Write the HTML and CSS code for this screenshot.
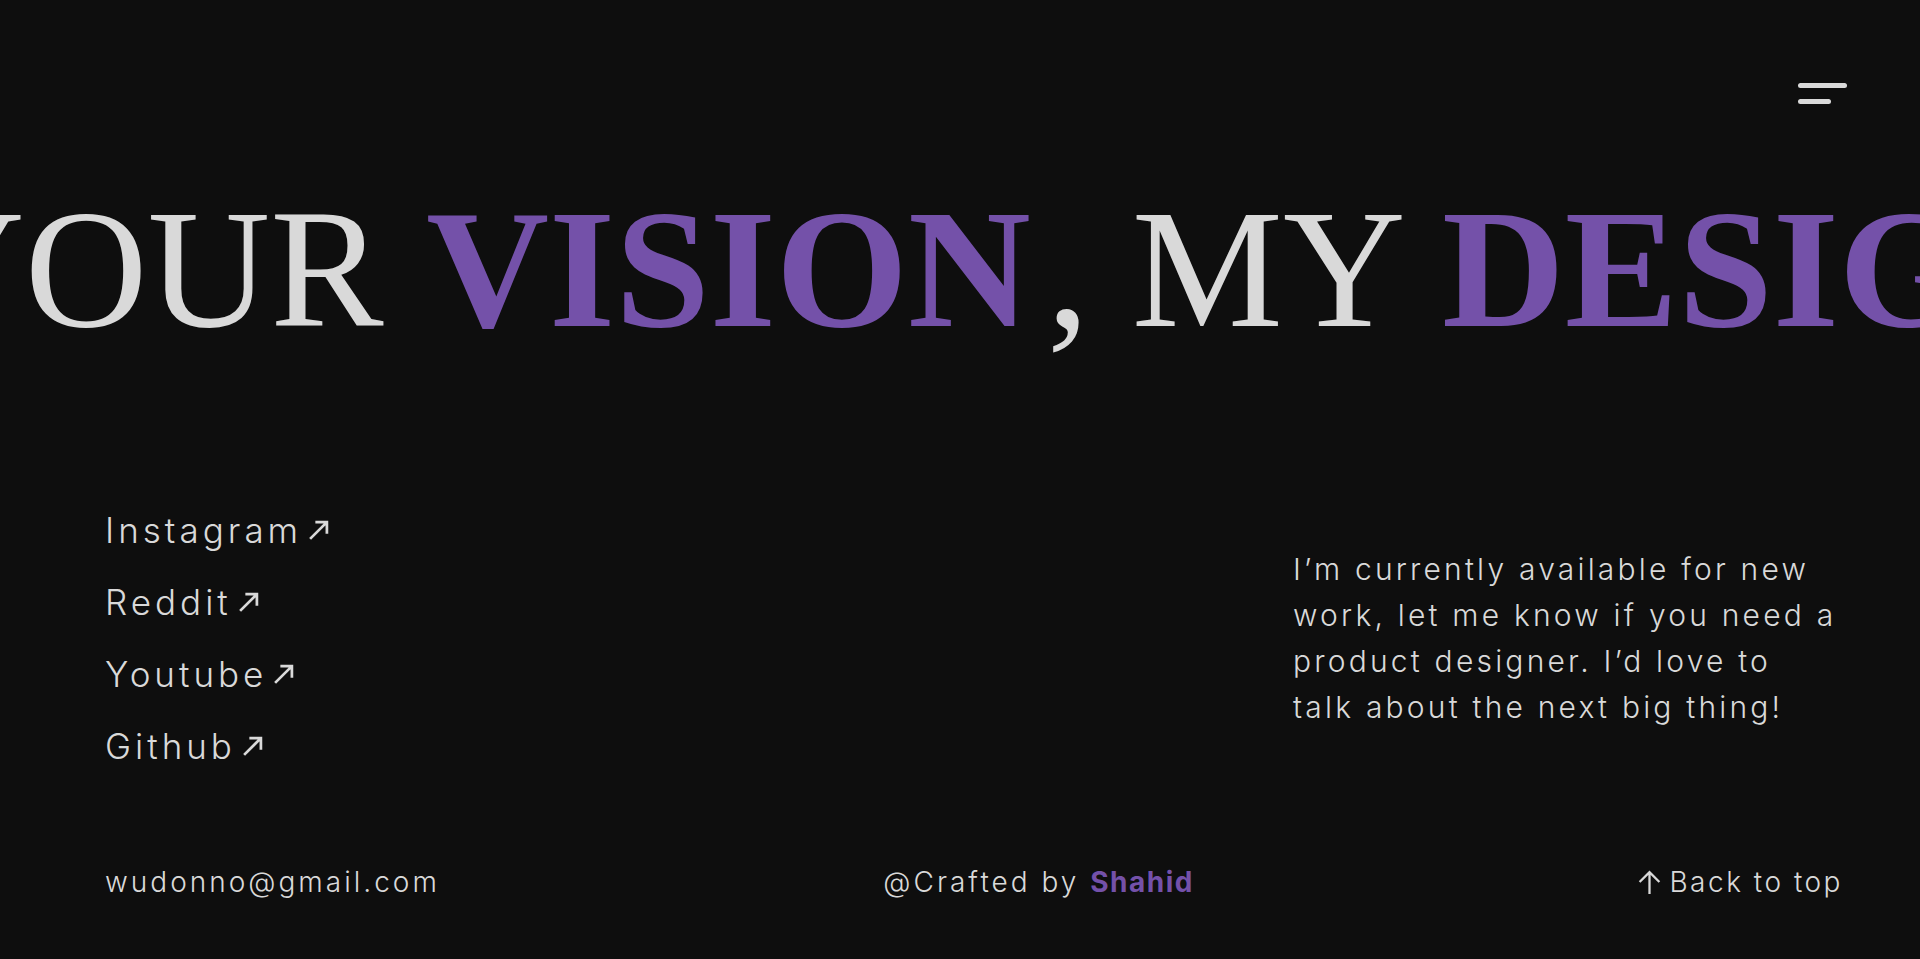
FILE: index.html
```html
<!DOCTYPE html>
<html lang="en">
<head>
<meta charset="utf-8">
<title>Your Vision, My Design</title>
<link rel="stylesheet" href="styles.css">
</head>
<body>
<div class="page">
  <header class="topbar">
    <button class="menu" aria-label="Menu">
      <span class="bar bar-long"></span>
      <span class="bar bar-short"></span>
    </button>
  </header>

  <h1 class="marquee"><span class="track">YOUR <em class="accent">VISION</em><span class="comma">,</span> MY <em class="accent">DESIGN</em><span class="comma">,</span> YOUR <em class="accent">VISION</em></span></h1>

  <section class="info">
    <ul class="socials">
      <li><a class="social" href="#">Instagram<svg class="ext" viewBox="0 0 20 20"><path d="M2 18 L18 2 M7 2 H18 V13"/></svg></a></li>
      <li><a class="social" href="#">Reddit<svg class="ext" viewBox="0 0 20 20"><path d="M2 18 L18 2 M7 2 H18 V13"/></svg></a></li>
      <li><a class="social" href="#">Youtube<svg class="ext" viewBox="0 0 20 20"><path d="M2 18 L18 2 M7 2 H18 V13"/></svg></a></li>
      <li><a class="social" href="#">Github<svg class="ext" viewBox="0 0 20 20"><path d="M2 18 L18 2 M7 2 H18 V13"/></svg></a></li>
    </ul>
    <p class="pitch">I’m currently available for new work, let me know if you need a product designer. I’d love to talk about the next big thing!</p>
  </section>

  <footer class="foot">
    <a class="mail" href="#">wudonno@gmail.com</a>
    <span class="credit">@Crafted by <strong class="author">Shahid</strong></span>
    <a class="totop" href="#"><svg class="up" viewBox="0 0 24 24"><path d="M12 23 V2 M2.5 11.5 L12 2 L21.5 11.5"/></svg>Back to top</a>
  </footer>
</div>
</body>
</html>
```

FILE: styles.css
```css
html, body {
  margin: 0;
  padding: 0;
  background: #0e0e0e;
}

body {
  color: #d9d9d9;
  font-family: Inter, "Noto Sans", sans-serif;
}

.page {
  height: 100vh;
  display: flex;
  flex-direction: column;
  overflow: hidden;
}

.topbar {
  display: flex;
  justify-content: flex-end;
  padding: 83px 73px 0 0;
}

.menu {
  background: none;
  border: 0;
  padding: 0;
  display: flex;
  flex-direction: column;
  align-items: flex-start;
  gap: 11px;
  width: 49px;
  cursor: pointer;
}

.bar {
  display: block;
  height: 5px;
  border-radius: 3px;
  background: #d9d9d9;
}

.bar-long { width: 49px; }
.bar-short { width: 33px; }

.marquee {
  margin: 80px 0 0;
  font-family: "Liberation Serif", "Times New Roman", serif;
  font-weight: 400;
  font-size: 170px;
  line-height: 170px;
  white-space: nowrap;
  overflow: hidden;
  color: #d9d9d9;
}

.track {
  display: inline-block;
  margin-left: -98px;
}

.comma {
  padding-left: 16px;
}

.accent {
  font-style: normal;
  font-weight: 700;
  color: #7451a9;
}

.info {
  display: flex;
  justify-content: space-between;
  align-items: center;
  padding: 0 83px 0 105px;
  margin-top: 152px;
}

.socials {
  list-style: none;
  margin: 0;
  padding: 0;
  display: flex;
  flex-direction: column;
  gap: 24px;
}

.social {
  color: inherit;
  text-decoration: none;
  font-size: 35px;
  font-weight: 300;
  letter-spacing: 4px;
  line-height: 48px;
  display: flex;
  align-items: center;
  gap: 6px;
}

.ext {
  width: 21px;
  height: 21px;
  fill: none;
  stroke: #d9d9d9;
  stroke-width: 2.6;
}

.pitch {
  width: 544px;
  margin: 0;
  font-size: 30px;
  line-height: 46px;
  letter-spacing: 3.2px;
  font-weight: 300;
}

.foot {
  margin-top: auto;
  display: flex;
  justify-content: space-between;
  align-items: center;
  padding: 0 77px 57px 105px;
  font-size: 28px;
  line-height: 40px;
  letter-spacing: 3px;
  font-weight: 300;
}

.mail, .totop {
  color: inherit;
  text-decoration: none;
}

.author {
  color: #7451a9;
  font-weight: 700;
  letter-spacing: 1.5px;
}

.totop {
  display: flex;
  align-items: center;
  gap: 7px;
  letter-spacing: 2.5px;
}

.up {
  width: 25px;
  height: 25px;
  fill: none;
  stroke: #d9d9d9;
  stroke-width: 2.2;
}
```
